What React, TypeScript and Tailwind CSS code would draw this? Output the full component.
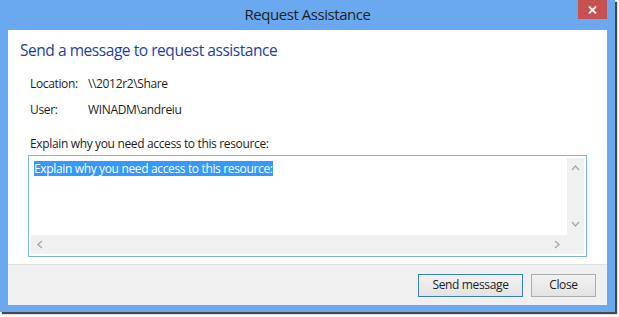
const font = { fontFamily: '"Open Sans", "Noto Sans", sans-serif' }

function Chevron({ dir }: { dir: 'up' | 'down' | 'left' | 'right' }) {
  const pts = {
    up: '1,6 4.5,2 8,6',
    down: '1,2 4.5,6 8,2',
    left: '6,1 2,4.5 6,8',
    right: '2,1 6,4.5 2,8',
  }[dir]
  return (
    <svg width="9" height="9" viewBox="0 0 9 9">
      <polyline points={pts} fill="none" stroke="#a6a6a6" strokeWidth="1.3" />
    </svg>
  )
}

export default function App() {
  return (
    <div className="w-[619px] h-[317px] bg-white overflow-hidden" style={font}>
      <div className="flex h-[312px] w-[615px] flex-col bg-[#6aa8f0] shadow-[2px_2px_1px_rgba(40,40,40,0.85)]">
        {/* title bar */}
        <div className="relative flex h-[30px] shrink-0 items-center justify-center">
          <span className="text-[15px] tracking-[-0.45px] text-[#1e1e1e] -mt-[1px]">Request Assistance</span>
          <div className="absolute right-[8px] top-0 flex h-[19px] w-[29px] items-center justify-center bg-[#c75050]">
            <svg width="9" height="8" viewBox="0 0 9 8">
              <path d="M1 0.5 L8 7.5 M8 0.5 L1 7.5" stroke="white" strokeWidth="1.8" />
            </svg>
          </div>
        </div>

        {/* client area */}
        <div className="mx-[8px] mb-[7px] flex flex-1 flex-col bg-white text-[12px] tracking-[-0.35px] text-[#1e1e1e]">
          <div className="flex-1 px-[20px]">
            <div className="-ml-[8px] mt-[9px] text-[15.5px] leading-[22px] tracking-[-0.45px] text-[#1c3ea6]">
              Send a message to request assistance
            </div>
            <div className="ml-[2px] mt-[15px] flex flex-col gap-[10px] leading-[16px]">
              <div className="flex">
                <span className="w-[58px]">Location:</span>
                <span>\\2012r2\Share</span>
              </div>
              <div className="flex">
                <span className="w-[58px]">User:</span>
                <span>WINADM\andreiu</span>
              </div>
            </div>
            <div className="ml-[2px] mt-[18px] leading-[16px]">
              Explain why you need access to this resource:
            </div>
            <div className="mt-[3px] flex h-[102px] flex-col border border-[#7eb4ea] p-[2px]">
              <div className="flex flex-1">
                <div className="flex-1 pl-[3px] pt-[2px]">
                  <span className="inline-block bg-[#3399ff] leading-[15px] text-white">
                    Explain why you need access to this resource:
                  </span>
                </div>
                <div className="flex w-[17px] flex-col items-center justify-between bg-[#f0f0f0] py-[6px]">
                  <Chevron dir="up" />
                  <Chevron dir="down" />
                </div>
              </div>
              <div className="flex h-[19px] items-center justify-between bg-[#f0f0f0] pl-[5px] pr-[22px]">
                <Chevron dir="left" />
                <Chevron dir="right" />
              </div>
            </div>
          </div>

          {/* footer */}
          <div className="flex h-[41px] shrink-0 items-center justify-end gap-[8px] border-t border-[#dfdfdf] bg-[#f0f0f0] pr-[11px]">
            <button className="h-[23px] w-[105px] border border-[#3c7fb1] bg-gradient-to-b from-[#f2f2f2] to-[#e3e3e3]">
              Send message
            </button>
            <button className="h-[23px] w-[65px] border border-[#adadad] bg-gradient-to-b from-[#f2f2f2] to-[#e3e3e3]">
              Close
            </button>
          </div>
        </div>
      </div>
    </div>
  )
}
